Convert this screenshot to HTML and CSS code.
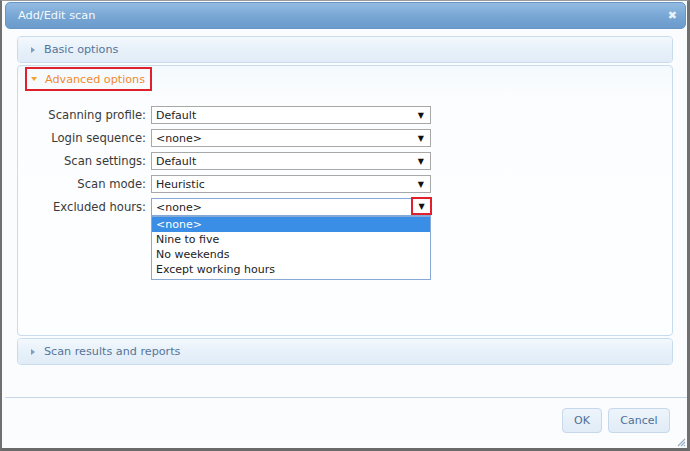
FILE: index.html
```html
<!DOCTYPE html>
<html>
<head>
<meta charset="utf-8">
<link rel="stylesheet" href="styles.css">
</head>
<body>
<div class="dialog">
  <div class="titlebar">
    <span class="title">Add/Edit scan</span>
    <span class="close">&#x2716;</span>
  </div>
  <div class="content">
    <div class="panel collapsed">
      <div class="phead"><span class="tri"></span><span class="plabel">Basic options</span></div>
    </div>
    <div class="panel open">
      <div class="phead open-head">
        <span class="mark"><span class="tri down"></span><span class="plabel orange">Advanced options</span></span>
      </div>
      <div class="pbody">
        <div class="form">
          <label>Scanning profile:</label>
          <div class="select"><span>Default</span><span class="arrow">&#9660;</span></div>
          <label>Login sequence:</label>
          <div class="select"><span>&lt;none&gt;</span><span class="arrow">&#9660;</span></div>
          <label>Scan settings:</label>
          <div class="select"><span>Default</span><span class="arrow">&#9660;</span></div>
          <label>Scan mode:</label>
          <div class="select"><span>Heuristic</span><span class="arrow">&#9660;</span></div>
          <label>Excluded hours:</label>
          <div class="select focus">
            <span>&lt;none&gt;</span><span class="arrow boxed">&#9660;</span>
            <ul class="list">
              <li class="sel">&lt;none&gt;</li>
              <li>Nine to five</li>
              <li>No weekends</li>
              <li>Except working hours</li>
            </ul>
          </div>
        </div>
      </div>
    </div>
    <div class="panel collapsed">
      <div class="phead"><span class="tri"></span><span class="plabel">Scan results and reports</span></div>
    </div>
  </div>
  <div class="footer">
    <button class="btn ok">OK</button>
    <button class="btn cancel">Cancel</button>
    <svg class="grip" width="10" height="10" viewBox="0 0 10 10"><path d="M9 2 L2 9 M9 5 L5 9 M9 8 L8 9" stroke="#9aaec4" stroke-width="1.2" fill="none"/></svg>
  </div>
</div>
</body>
</html>
```
FILE: styles.css
```css
* { box-sizing: border-box; }
html, body { margin: 0; padding: 0; }
body {
  width: 690px;
  height: 451px;
  background: #ffffff;
  font-family: "DejaVu Sans", Verdana, sans-serif;
  font-size: 11px;
  color: #333;
}
.dialog {
  width: 690px;
  height: 451px;
  display: flex;
  flex-direction: column;
  border-left: 2px solid #707070;
  border-right: 3px solid #707070;
  border-bottom: 3px solid #6a6a6a;
  border-top: 1px solid #9a9a9a;
  background: #fafcfe;
}
.titlebar {
  margin: 1px 1px 0 3px;
  height: 27px;
  border-radius: 5px;
  border: 1px solid #6796c6;
  background: linear-gradient(#93bbe1, #77a6d4 55%, #6b9bcc);
  display: flex;
  align-items: center;
  justify-content: space-between;
  padding: 0 8px 0 12px;
  color: #fff;
}
.title { font-size: 11.3px; color: #f6f9fc; }
.close { font-size: 11px; color: #e9f1f9; font-weight: bold; }
.content {
  padding: 7px 14px 0 15px;
  display: flex;
  flex-direction: column;
  gap: 2px;
}
.panel {
  border: 1px solid #c9dcee;
  border-radius: 4px;
}
.collapsed .phead {
  height: 25px;
  background: linear-gradient(#f3f8fd, #e6f0f9 55%, #e1ecf7);
  border-radius: 3px;
}
.phead {
  display: flex;
  align-items: center;
  padding-left: 13px;
  font-size: 11.2px;
}
.plabel { color: #56749a; margin-left: 9px; }
.plabel.orange { color: #ee8a2e; }
.tri {
  width: 0; height: 0;
  border-top: 3px solid transparent;
  border-bottom: 3px solid transparent;
  border-left: 4px solid #7d9dc2;
}
.tri.down {
  border-left: 3px solid transparent;
  border-right: 3px solid transparent;
  border-top: 4px solid #f2a22a;
  border-bottom: 0;
}
.panel.open {
  height: 271px;
  background: linear-gradient(#f4f9fd, #fbfdfe 30px, #fdfeff);
}
.open-head { height: 26px; padding-left: 7px; }
.mark {
  display: flex;
  align-items: center;
  border: 2px solid #e0202c;
  height: 24px;
  padding: 0 5px 0 4px;
}
.mark .plabel { margin-left: 8px; }
.pbody { padding: 14px 0 0 0; }
.form {
  display: grid;
  grid-template-columns: 128px 280px;
  column-gap: 5px;
  row-gap: 5px;
  align-items: center;
}
.form label { text-align: right; color: #3a3a3a; font-size: 11.6px; }
.select {
  position: relative;
  height: 18px;
  border: 1px solid #a8a8a8;
  background: #fff;
  display: flex;
  align-items: center;
  justify-content: space-between;
  padding: 0 6px 0 4px;
  color: #222;
}
.select.focus { border-color: #86a9d6; }
.arrow { font-size: 8px; color: #111; }
.arrow.boxed {
  position: absolute;
  right: -2px;
  top: -2px;
  width: 21px;
  height: 18px;
  border: 2px solid #e0202c;
  display: flex;
  align-items: center;
  justify-content: center;
  background: #fff;
}
.list {
  position: absolute;
  left: -1px;
  right: -1px;
  top: 17px;
  margin: 0;
  padding: 0;
  list-style: none;
  border: 1px solid #86a9d6;
  background: #fff;
  padding-bottom: 2px;
}
.list li {
  height: 15px;
  line-height: 15px;
  padding-left: 4px;
  color: #222;
}
.list li.sel { background: #3b8ee5; color: #fff; }
.footer {
  margin: auto 0 0 3px;
  border-top: 1px solid #c8d7e6;
  height: 51px;
  display: flex;
  justify-content: flex-end;
  align-items: flex-start;
  padding: 10px 17px 0 0;
  gap: 6px;
  position: relative;
}
.btn {
  font-family: "DejaVu Sans", Verdana, sans-serif;
  font-size: 11px;
  color: #4f6f95;
  height: 25px;
  border: 1px solid #c6d8ea;
  border-radius: 4px;
  background: linear-gradient(#edf4fb, #e1ecf7);
  padding: 0;
}
.btn.ok { width: 40px; }
.btn.cancel { width: 62px; }
.grip { position: absolute; right: 1px; bottom: 1px; }
```
